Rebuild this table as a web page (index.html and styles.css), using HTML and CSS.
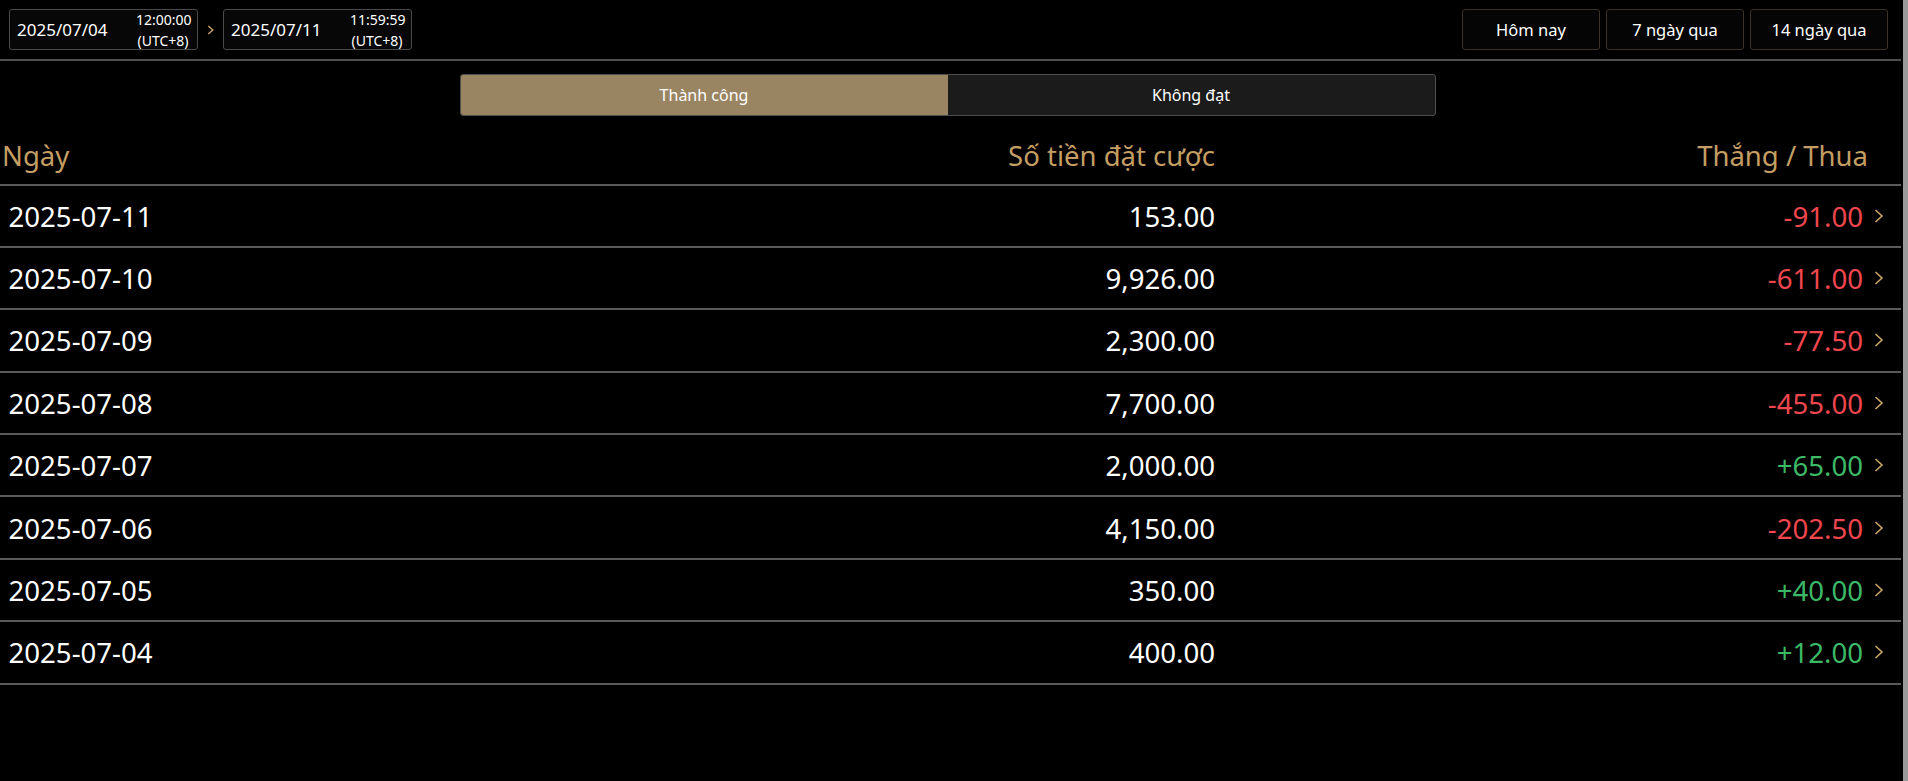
FILE: index.html
```html
<!DOCTYPE html>
<html lang="vi">
<head>
<meta charset="utf-8">
<title>Lịch sử cược</title>
<link rel="stylesheet" href="styles.css">
</head>
<body>
<div class="page">
  <div class="main">
    <div class="topbar">
      <div class="range">
        <div class="datebox">
          <span class="date">2025/07/04</span>
          <span class="time">12:00:00<br>(UTC+8)</span>
        </div>
        <svg class="range-arrow" width="8" height="10" viewBox="0 0 8 10"><polyline points="1.3,1 5.8,5 1.3,9" fill="none" stroke="#c9a467" stroke-width="1.4"/></svg>
        <div class="datebox">
          <span class="date">2025/07/11</span>
          <span class="time">11:59:59<br>(UTC+8)</span>
        </div>
      </div>
      <div class="quick">
        <button class="qbtn">Hôm nay</button>
        <button class="qbtn">7 ngày qua</button>
        <button class="qbtn">14 ngày qua</button>
      </div>
    </div>

    <div class="tabs-wrap">
      <div class="tabs">
        <div class="tab active">Thành công</div>
        <div class="tab">Không đạt</div>
      </div>
    </div>

    <div class="table">
      <div class="row head">
        <div class="c1">Ngày</div>
        <div class="c2">Số tiền đặt cược</div>
        <div class="c3">Thắng / Thua</div>
      </div>
      <div class="row"><div class="c1">2025-07-11</div><div class="c2">153.00</div><div class="c3"><span class="neg">-91.00</span><svg class="chev" width="10" height="14" viewBox="0 0 10 14"><polyline points="1.5,1 8,7 1.5,13" fill="none" stroke="#cba668" stroke-width="1.6"/></svg></div></div>
      <div class="row"><div class="c1">2025-07-10</div><div class="c2">9,926.00</div><div class="c3"><span class="neg">-611.00</span><svg class="chev" width="10" height="14" viewBox="0 0 10 14"><polyline points="1.5,1 8,7 1.5,13" fill="none" stroke="#cba668" stroke-width="1.6"/></svg></div></div>
      <div class="row"><div class="c1">2025-07-09</div><div class="c2">2,300.00</div><div class="c3"><span class="neg">-77.50</span><svg class="chev" width="10" height="14" viewBox="0 0 10 14"><polyline points="1.5,1 8,7 1.5,13" fill="none" stroke="#cba668" stroke-width="1.6"/></svg></div></div>
      <div class="row"><div class="c1">2025-07-08</div><div class="c2">7,700.00</div><div class="c3"><span class="neg">-455.00</span><svg class="chev" width="10" height="14" viewBox="0 0 10 14"><polyline points="1.5,1 8,7 1.5,13" fill="none" stroke="#cba668" stroke-width="1.6"/></svg></div></div>
      <div class="row"><div class="c1">2025-07-07</div><div class="c2">2,000.00</div><div class="c3"><span class="pos">+65.00</span><svg class="chev" width="10" height="14" viewBox="0 0 10 14"><polyline points="1.5,1 8,7 1.5,13" fill="none" stroke="#cba668" stroke-width="1.6"/></svg></div></div>
      <div class="row"><div class="c1">2025-07-06</div><div class="c2">4,150.00</div><div class="c3"><span class="neg">-202.50</span><svg class="chev" width="10" height="14" viewBox="0 0 10 14"><polyline points="1.5,1 8,7 1.5,13" fill="none" stroke="#cba668" stroke-width="1.6"/></svg></div></div>
      <div class="row"><div class="c1">2025-07-05</div><div class="c2">350.00</div><div class="c3"><span class="pos">+40.00</span><svg class="chev" width="10" height="14" viewBox="0 0 10 14"><polyline points="1.5,1 8,7 1.5,13" fill="none" stroke="#cba668" stroke-width="1.6"/></svg></div></div>
      <div class="row"><div class="c1">2025-07-04</div><div class="c2">400.00</div><div class="c3"><span class="pos">+12.00</span><svg class="chev" width="10" height="14" viewBox="0 0 10 14"><polyline points="1.5,1 8,7 1.5,13" fill="none" stroke="#cba668" stroke-width="1.6"/></svg></div></div>
    </div>
  </div>
  <div class="rail"></div>
</div>
</body>
</html>
```

FILE: styles.css
```css
* { box-sizing: border-box; }
html, body {
  margin: 0;
  padding: 0;
  background: #000;
  color: #fff;
  font-family: "Noto Sans", "Open Sans", sans-serif;
}
.page {
  display: flex;
  width: 1908px;
  height: 781px;
}
.main {
  flex: 1;
  min-width: 0;
}
.rail {
  width: 5px;
  margin-left: 2px;
  background: #9a9a9a;
}

/* top bar */
.topbar {
  height: 61px;
  border-bottom: 2px solid #4f4f4f;
  display: flex;
  align-items: center;
  justify-content: space-between;
  padding: 0 13px 0 9px;
}
.range {
  display: flex;
  align-items: center;
}
.datebox {
  width: 189px;
  height: 41px;
  border: 1px solid #4a4a4a;
  border-radius: 3px;
  background: #070707;
  display: flex;
  align-items: center;
  justify-content: space-between;
  padding: 0 7px 0 7px;
}
.date {
  font-size: 17px;
  line-height: 20px;
}
.time {
  font-size: 14px;
  line-height: 21px;
  text-align: center;
  width: 54px;
}
.range-arrow {
  margin: 0 8px 0 9px;
  display: block;
}
.quick {
  display: flex;
  gap: 6px;
}
.qbtn {
  width: 138px;
  height: 41px;
  background: #050505;
  border: 1px solid #3b3227;
  border-radius: 3px;
  color: #fff;
  font-family: inherit;
  font-size: 16.5px;
  padding: 0;
}

/* tabs */
.tabs-wrap {
  padding: 13px 6px 0 0;
  display: flex;
  justify-content: center;
}
.tabs {
  width: 976px;
  height: 42px;
  display: flex;
  border: 1px solid #4e4e4e;
  border-radius: 3px;
  overflow: hidden;
  background: #1b1b1b;
}
.tab {
  flex: 1;
  display: flex;
  align-items: center;
  justify-content: center;
  font-size: 16px;
  color: #fff;
}
.tab.active {
  background: #9a8563;
}

/* table */
.row {
  display: grid;
  grid-template-columns: 615px 600px 1fr;
  align-items: center;
  height: 62.4px;
  border-bottom: 2px solid #5a5a5a;
  font-size: 27.6px;
}
.row .c1 { padding-left: 8.5px; }
.row .c2 { text-align: right; }
.row .c3 {
  display: flex;
  justify-content: flex-end;
  align-items: center;
  padding-right: 17px;
}
.row.head {
  height: auto;
  align-items: end;
  padding: 21px 0 8.5px;
  font-size: 27.5px;
  line-height: 38px;
  color: #c49e62;
}
.row.head .c1 { padding-left: 2px; }
.row.head .c3 {
  padding-right: 33px;
}
.neg { color: #f0464e; }
.pos { color: #3cb966; }
.chev {
  display: block;
  margin-left: 11px;
}
```
